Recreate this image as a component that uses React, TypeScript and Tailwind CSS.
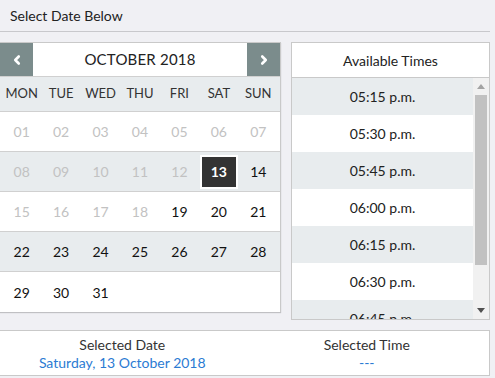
import React from 'react';
import { ChevronLeft, ChevronRight } from 'lucide-react';

const dayNames = ['MON', 'TUE', 'WED', 'THU', 'FRI', 'SAT', 'SUN'];

const weeks: { d: string; off?: boolean; sel?: boolean }[][] = [
  ['01', '02', '03', '04', '05', '06', '07'].map((d) => ({ d, off: true })),
  [
    ...['08', '09', '10', '11', '12'].map((d) => ({ d, off: true })),
    { d: '13', sel: true },
    { d: '14' },
  ],
  [...['15', '16', '17', '18'].map((d) => ({ d, off: true })), { d: '19' }, { d: '20' }, { d: '21' }],
  ['22', '23', '24', '25', '26', '27', '28'].map((d) => ({ d })),
  ['29', '30', '31', '', '', '', ''].map((d) => ({ d })),
];

const times = [
  '05:15 p.m.',
  '05:30 p.m.',
  '05:45 p.m.',
  '06:00 p.m.',
  '06:15 p.m.',
  '06:30 p.m.',
  '06:45 p.m.',
  '07:00 p.m.',
];

export default function App() {
  return (
    <div
      className="w-[495px] h-[378px] bg-[#f0f0f4] text-[#222] overflow-hidden"
      style={{ fontFamily: 'Lato, "Open Sans", sans-serif' }}
    >
      <div className="w-[490px]">
        <div className="h-[32px] px-[10px] pt-[5px] text-[14px] border-b border-[#c8c8cc]">
          Select Date Below
        </div>

        <div className="flex justify-between mt-[10px]">
          {/* calendar */}
          <div className="w-[281px] h-[270px] bg-white border border-[#c9c9c9] border-l-0 shadow-[0_1px_1px_rgba(0,0,0,0.2)]">
            <div className="h-[34px] flex border-b border-[#d0d0d0]">
              <div className="w-[33px] bg-[#7b8c8c] flex items-center justify-center">
                <ChevronLeft className="w-[14px] h-[14px] text-white" strokeWidth={4.5} />
              </div>
              <div className="flex-1 flex items-center justify-center text-[15px] tracking-[0.2px]">
                OCTOBER 2018
              </div>
              <div className="w-[33px] bg-[#7b8c8c] flex items-center justify-center">
                <ChevronRight className="w-[14px] h-[14px] text-white" strokeWidth={4.5} />
              </div>
            </div>
            <div className="h-[35px] grid grid-cols-7 px-[2px] bg-[#e8ecee] border-b border-[#d0d0d0] text-[13px] text-[#333]">
              {dayNames.map((n) => (
                <div key={n} className="flex items-center justify-center">
                  {n}
                </div>
              ))}
            </div>
            {weeks.map((w, i) => (
              <div
                key={i}
                className={`h-[40px] grid grid-cols-7 px-[2px] text-[14px] ${
                  i % 2 === 1 ? 'bg-[#e8ecee]' : 'bg-white'
                } ${i < weeks.length - 1 ? 'border-b border-[#d0d0d0]' : ''}`}
              >
                {w.map((c, j) => (
                  <div key={j} className="flex items-center justify-center">
                    {c.sel ? (
                      <div className="w-[38px] h-[34px] border-2 border-white bg-[#333] text-white font-bold flex items-center justify-center">
                        {c.d}
                      </div>
                    ) : (
                      <span className={c.off ? 'text-[#c2c2c2]' : 'text-[#111]'}>{c.d}</span>
                    )}
                  </div>
                ))}
              </div>
            ))}
          </div>

          {/* times */}
          <div className="w-[199px] h-[278px] bg-white border border-[#c9c9c9] flex flex-col">
            <div className="h-[35px] shrink-0 flex items-center justify-center text-[14px] border-b border-[#c9c9c9]">
              Available Times
            </div>
            <div className="flex flex-1 overflow-hidden">
              <div className="flex-1 overflow-hidden">
                {times.map((t, i) => (
                  <div
                    key={t}
                    className={`h-[37px] flex items-center justify-center text-[14px] ${
                      i % 2 === 0 ? 'bg-[#e8ecee]' : 'bg-white'
                    }`}
                  >
                    {t}
                  </div>
                ))}
              </div>
              <div className="w-[16px] bg-[#f1f1f1] flex flex-col items-center">
                <div className="h-[17px] flex items-center justify-center">
                  <svg width="8" height="5" viewBox="0 0 8 5">
                    <path d="M4 0 L8 5 L0 5 Z" fill="#a3a3a3" />
                  </svg>
                </div>
                <div className="w-[12px] h-[170px] bg-[#c1c1c1]" />
                <div className="flex-1" />
                <div className="h-[17px] flex items-center justify-center">
                  <svg width="8" height="5" viewBox="0 0 8 5">
                    <path d="M0 0 L8 0 L4 5 Z" fill="#505050" />
                  </svg>
                </div>
              </div>
            </div>
          </div>
        </div>

        {/* summary */}
        <div className="mt-[10px] h-[46px] bg-white border border-[#c9c9c9] border-l-0 grid grid-cols-2 text-[14px] leading-[18px]">
          <div className="flex flex-col items-center pt-[5px]">
            <div className="text-[#333]">Selected Date</div>
            <div className="text-[#2b7bd3]">Saturday, 13 October 2018</div>
          </div>
          <div className="flex flex-col items-center pt-[5px]">
            <div className="text-[#333]">Selected Time</div>
            <div className="text-[#2b7bd3]">---</div>
          </div>
        </div>
      </div>
    </div>
  );
}
